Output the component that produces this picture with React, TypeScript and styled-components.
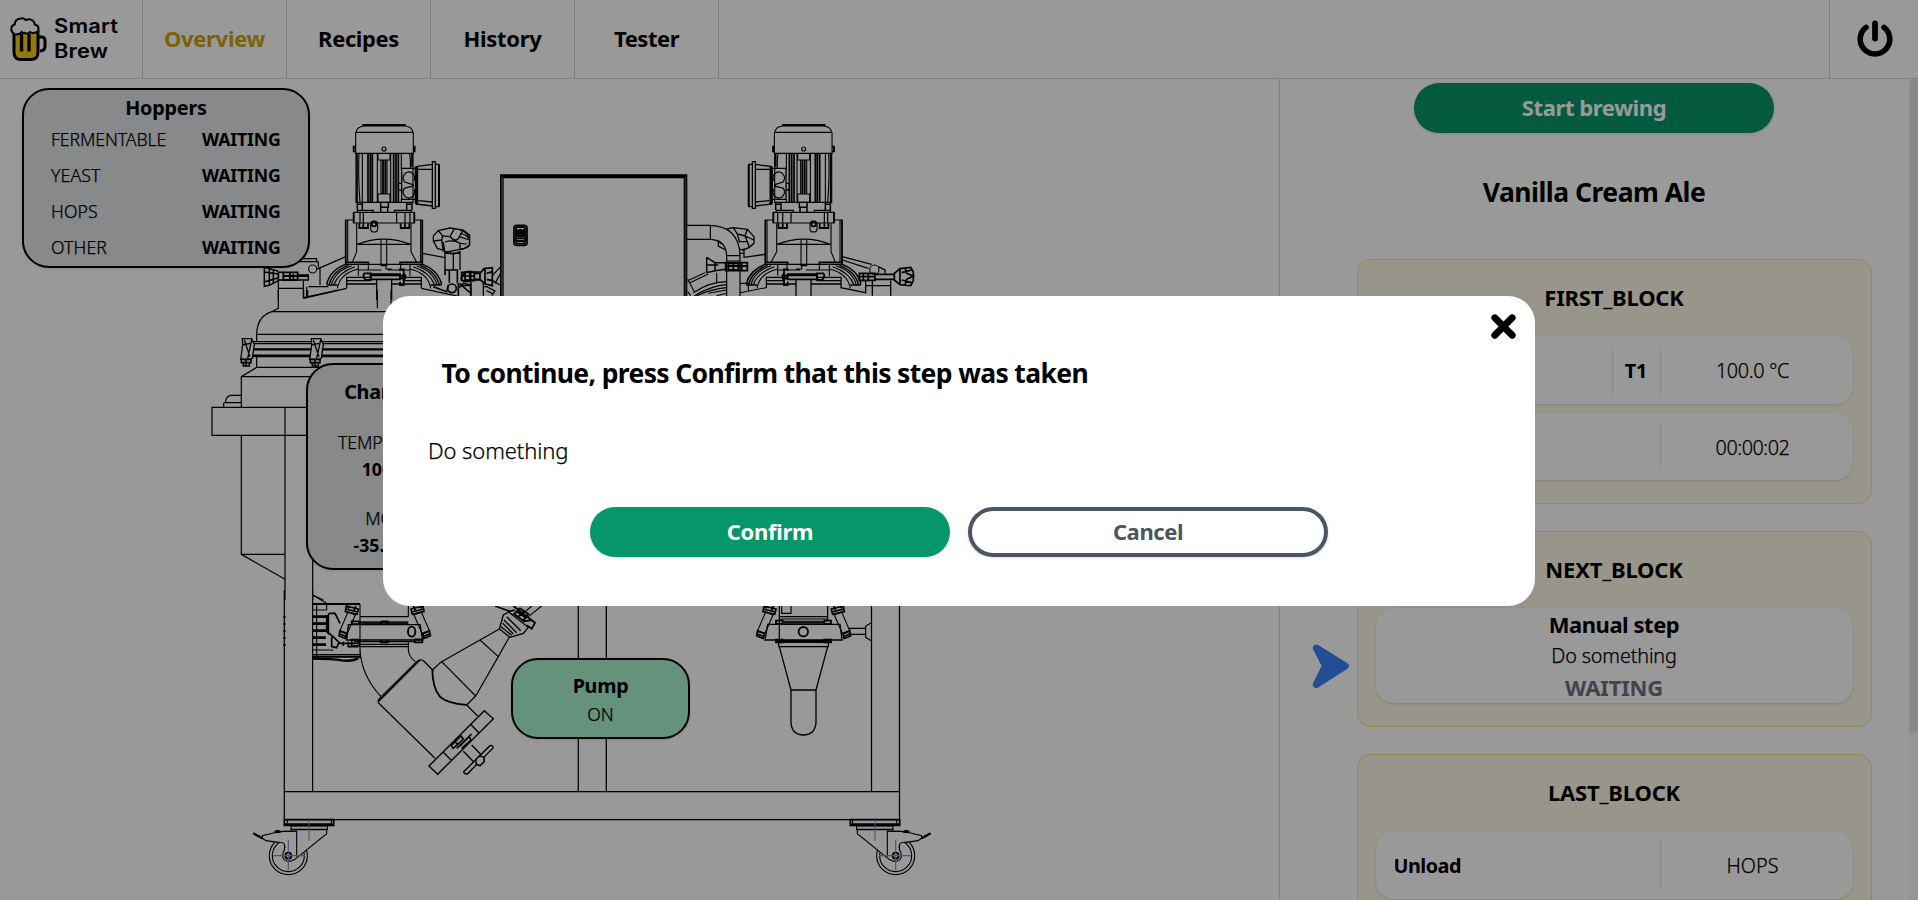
import React from 'react';
import styled, { createGlobalStyle, css } from 'styled-components';

const GlobalStyle = createGlobalStyle`
  * { box-sizing: border-box; }
  html, body { margin: 0; padding: 0; background: #fff; overflow: hidden; }
  body { font-family: 'Noto Sans', 'Open Sans', sans-serif; color: #000; }
`;

type TextProps = { $size?: number; $light?: boolean; $spacing?: number; $line?: number; $color?: string };

const Text = styled.span<TextProps>`
  display: block;
  white-space: nowrap;
  font-size: ${(p) => p.$size ?? 22}px;
  font-weight: ${(p) => (p.$light ? 300 : 700)};
  letter-spacing: ${(p) => (p.$spacing ?? 0) - (p.$light ? 0 : 0.2)}px;
  line-height: ${(p) => p.$line ?? 31.5}px;
  ${(p) => p.$light && css`-webkit-text-stroke: 0.25px currentColor;`}
  ${(p) => p.$color && css`color: ${p.$color};`}
`;

const Page = styled.div`
  display: flex;
  flex-direction: column;
  width: 1918px;
  height: 900px;
  overflow: hidden;
`;

/* Header */

const Header = styled.header`
  display: flex;
  flex: none;
  height: 79px;
  border-bottom: 1px solid #d1d5db;
`;

const Brand = styled.div`
  display: flex;
  align-items: center;
  gap: 6.5px;
  width: 143px;
  padding: 0 0 1px 9px;
  border-right: 1px solid #d1d5db;
`;

const BrandName = styled.div`
  font-family: Inter, 'Open Sans', sans-serif;
  font-size: 19.5px;
  font-weight: 600;
  line-height: 25px;
  letter-spacing: 0.2px;
  transform: scaleX(1.12);
  transform-origin: 0 50%;
`;

const NavItem = styled.a<{ $active?: boolean }>`
  display: flex;
  align-items: center;
  justify-content: center;
  width: 144px;
  border-right: 1px solid #d1d5db;
  color: ${(p) => (p.$active ? '#cfa20c' : '#000')};
`;

const PowerButton = styled.button`
  display: flex;
  align-items: center;
  justify-content: center;
  width: 89px;
  margin-left: auto;
  padding: 0 0 0 2px;
  background: none;
  border: 0;
  border-left: 1px solid #d1d5db;
`;

/* Body */

const Body = styled.main`
  display: flex;
  flex: 1;
  min-height: 0;
`;

const Diagram = styled.section`
  position: relative;
  width: 1279px;
  height: 821px;
  overflow: hidden;
`;

const Machine = styled.svg`
  display: block;
  fill: none;
  stroke: #000;
  & path, & rect, & circle, & ellipse { vector-effect: non-scaling-stroke; }
`;

const Node = styled.div<{ $x: number; $y: number; $w: number; $h: number; $bg: string; $pad: number }>`
  position: absolute;
  left: ${(p) => p.$x}px;
  top: ${(p) => p.$y}px;
  width: ${(p) => p.$w}px;
  height: ${(p) => p.$h}px;
  padding-top: ${(p) => p.$pad}px;
  display: flex;
  flex-direction: column;
  align-items: center;
  border: 2px solid #000;
  border-radius: 27px;
  background: ${(p) => p.$bg};
  box-shadow: 0 1px 3px rgba(0, 0, 0, 0.1);
`;

const HopperRow = styled.div`
  display: flex;
  justify-content: space-between;
  align-self: stretch;
  height: 36px;
  padding: 0 27.5px 0 27px;
`;

const Readings = styled.div`
  display: flex;
  flex: none;
  flex-direction: column;
  margin-top: 23px;
`;

const Reading = styled.div`
  display: flex;
  flex: none;
  flex-direction: column;
  align-items: center;
  height: 76px;
`;

const Sidebar = styled.aside`
  display: flex;
  flex: 1;
  border-left: 1px solid #d1d5db;
`;

const SideScroll = styled.div`
  display: flex;
  flex-direction: column;
  align-items: center;
  width: 628px;
  padding-top: 4px;
`;

const ScrollTrack = styled.div`
  width: 9px;
  margin-left: auto;
  background: #f9f9f9;
`;

const ScrollThumb = styled.div`
  height: 655px;
  border-radius: 5px;
  background: #e4e4e5;
`;

const Button = styled.button<{ $outline?: boolean }>`
  display: flex;
  flex: none;
  align-items: center;
  justify-content: center;
  width: 360px;
  height: 50px;
  padding: 0 0 1px;
  border-radius: 25px;
  font-family: inherit;
  border: ${(p) => (p.$outline ? '4px solid #4b5563' : '0')};
  background: ${(p) => (p.$outline ? '#fff' : '#059669')};
  color: ${(p) => (p.$outline ? '#4b5563' : '#fff')};
  box-shadow: 0 1px 3px rgba(0, 0, 0, 0.15);
`;

const RecipeTitle = styled.h2`
  margin: 41px 0 48.5px;
`;

const BlockList = styled.div`
  display: flex;
  flex-direction: column;
  align-self: stretch;
  gap: 27px;
`;

const BlockRow = styled.div`
  display: flex;
`;

const Gutter = styled.div`
  width: 77px;
  flex: none;
  padding: 112px 0 0 32px;
`;

const Block = styled.div`
  display: flex;
  flex: none;
  flex-direction: column;
  gap: 9px;
  width: 515px;
  padding: 0 18.5px 22.5px 17.5px;
  border: 1px solid #fbe37a;
  border-radius: 13.5px;
  background: #fefae6;
`;

const BlockTitle = styled.div`
  display: flex;
  justify-content: center;
  padding: 22.5px 0 13.5px;
`;

const Card = styled.div`
  display: flex;
  height: 67.5px;
  padding: 9px 0;
  border-radius: 18px;
  background: #fff;
  box-shadow: 0 1px 3px rgba(0, 0, 0, 0.14);
`;

const Cell = styled.div<{ $w?: number; $line?: boolean; $last?: boolean }>`
  display: flex;
  align-items: center;
  padding-top: 2px;
  ${(p) => (p.$w ? css`width: ${p.$w}px; justify-content: center;` : css`flex: 1; padding-left: 18px;`)}
  ${(p) => p.$last && css`padding-right: 8px;`}
  ${(p) => p.$line && css`border-left: 1px solid #e5e7eb;`}
`;

const ManualCard = styled(Card)`
  flex-direction: column;
  align-items: center;
  height: 95px;
  padding: 0.7px 0 0;
`;

/* Dialog */

const Overlay = styled.div`
  position: fixed;
  inset: 0;
  display: flex;
  justify-content: center;
  align-items: flex-start;
  padding-top: 296px;
  background: rgba(0, 0, 0, 0.4);
`;

const Dialog = styled.div`
  position: relative;
  width: 1152px;
  height: 310px;
  padding: 58.5px 45px 0;
  border-radius: 27px;
  background: #fff;
`;

const DialogTitle = styled.h1`
  margin: 0 0 44px 13.5px;
`;

const DialogActions = styled.div`
  display: flex;
  justify-content: center;
  gap: 18px;
  margin-top: 41px;
`;

const CloseButton = styled.button`
  position: absolute;
  top: 17px;
  right: 18px;
  display: flex;
  padding: 0;
  border: 0;
  background: none;
`;

const BeerIcon = () => (
  <svg width="38" height="46" viewBox="9 14 38 46" fill="none" stroke="#000">
    <path d="M38 35h3.500q3.500 0 3.500 3.500v6q0 4-5 4.500" strokeWidth="3" />
    <path d="M14 29V50q0 7.500 7 7.500h9.500q7.500 0 7.500-7.500V29z" fill="#facc15" strokeWidth="3" />
    <path d="M15 32.500q-4-2.500-3.700-6q.4-3.500 3.400-4q.3-5.500 6-6q3-.8 5 1.500q4-1.800 7 .5q2.200 1.600 2 4q4 .8 3.800 4.500q-.3 3.500-4 3.700q-2.500.8-4.500-.7q-2.500 2.500-5.500.8q-1.500.5-2.800-.8q-1.600 2.800-6.700 2.500z" fill="#fff" strokeWidth="2" />
    <path d="M21.500 32V49.500M29 32V49.500" strokeWidth="3.400" />
  </svg>
);

const PowerIcon = () => (
  <svg width="38" height="38" viewBox="1856 20 38 38" fill="none" stroke="#000" strokeWidth="6" strokeLinecap="round">
    <path d="M1866 27.400a14.800 14.800 0 1 0 18 0" strokeWidth="5.600" />
    <path d="M1875 23.500V38.500" strokeWidth="5.800" />
  </svg>
);

const CloseIcon = () => (
  <svg width="27" height="27" viewBox="0 0 27 27" stroke="#000" strokeWidth="6.900" strokeLinecap="round">
    <path d="M4.800 4.800L22.200 22.200M22.200 4.800L4.800 22.200" />
  </svg>
);

const PointerIcon = () => (
  <svg width="38" height="46" viewBox="1312 643 38 46" fill="#3b82f6" stroke="#3b82f6" strokeWidth="7" strokeLinejoin="round">
    <path d="M1316.300 648L1345.300 666L1316.300 684.500L1325.500 666z" />
  </svg>
);

/* Motor, gearbox and lid of one vessel */
const Motor = () => (
  <g transform="translate(0 70) scale(.333333)">
    <path d="M1087 165H1217" strokeWidth="2.200" />
    <path d="M1067 250V190Q1070 170 1092 168H1216Q1237 170 1240 190V250zM1067 187H1240" />
    <circle cx="1152" cy="237" r="6" />
    <path d="M1067 230h-6v14h6M1240 230h4v14h-4" strokeWidth="1.800" />
    <path d="M1068 250V397H1239V250M1077 250Q1074 320 1080 397M1087 250V397M1132 250V397M1172 250V397M1204 250V300M1204 388V397M1229 250Q1233 275 1231 295M1172 330V397" />
    <path d="M1071 250V397M1104 250V397M1111 250V397M1117 250V397M1181 250V397M1188 250V397M1195 250V397M1236 250V290" strokeWidth="1.700" />
    <path d="M1134 250V270H1170V250M1134 372H1170V397H1134zM1143 270V372M1161 270V372" />
    <path d="M1149 270V372M1156 270V372" strokeWidth="1.800" />
    <path d="M1142 398V412H1165V398M1142 412V427M1163 412V427M1072 398V420M1087 398V420M1220 398V420M1236 398V420M1072 403H1087M1220 403H1236" strokeWidth="1.500" />
    <path d="M1245 295H1205V388H1245M1242 332A17 18 0 1 0 1214 336L1236 343Q1242 346 1236 349L1214 354A17 18 0 1 0 1242 358M1205 340H1195V360H1205" strokeWidth="1.300" />
    <path d="M1247 290V402M1252 290V402" strokeWidth="1.700" />
    <path d="M1247 290L1297 283M1247 402L1297 408M1255 298H1297M1255 392L1297 396M1297 275H1306V415H1297zM1306 283H1317V410H1306M1297 275V415" strokeWidth="1.300" />
    <path d="M1317 285V408" strokeWidth="2" />
    <path d="M1061 427H1243V459H1061zM1080 427V459M1090 427V459M1190 427V459M1215 427V459M1230 427V459M1072 427V421H1120V427M1183 427V421H1234V427" strokeWidth="1.200" />
    <path d="M1061 427V459M1243 427V459M1078 460V474H1104V460M1090 460V474M1202 460V474H1228V460M1215 460V474" strokeWidth="1.800" />
    <rect x="1112" y="453" width="21" height="33" rx="10" />
    <circle cx="1122" cy="462" r="7" strokeWidth="1.700" />
    <path d="M1063 450H1037V583H1267V450H1243M1043 450V577M1262 450V577M1070 460V545L1057 577M1233 460V545L1250 577M1072 523Q1150 492 1232 523M1072 523H1232M1143 510V587H1160V510" />
    <path d="M1037 450V583M1267 450V583M1037 577H1105V585M1267 577H1200V585" strokeWidth="1.600" />
    <path d="M1075 585V617M1230 585V617M1075 600H1145M1163 600H1230M1105 585V600M1202 585V600M1158 585V597H1175" />
    <path d="M1112 612H1200V628H1112zM1112 616H1200" strokeWidth="1.700" />
    <path d="M1093 610H1112V630H1097Q1086 620 1093 610zM1200 603V598H1211V645H1200V635M1211 610Q1222 620 1211 632" strokeWidth="1.800" />
    <circle cx="1206" cy="621" r="5" strokeWidth="1.800" />
    <path d="M1037 583Q990 600 980 643M1045 586Q998 603 987 645M1267 583Q1314 600 1325 643M1260 586Q1307 603 1318 645" strokeWidth="1.500" />
    <path d="M1055 587Q1005 603 994 645M1065 590Q1015 607 1001 645M1075 597Q1020 610 1012 655M1250 587Q1300 603 1311 645M1240 590Q1290 607 1304 645M1230 597Q1285 610 1292 655" />
    <path d="M980 645H1012M1292 645H1325M1040 655V622H1110M1200 622H1264V655M1040 632H1110M1212 632H1264M1040 642H1130M1175 642H1264M1130 630V690M1175 630V690" strokeWidth="1.300" />
  </g>
);

const Caster = () => (
  <g transform="translate(230 770) scale(.333333)">
    <circle cx="175" cy="257" r="57" />
    <circle cx="175" cy="257" r="48" />
    <path d="M290 178V191L195 268Q175 280 161 268Q154 256 163 240Q170 215 145 217L108 212L97 205V197L140 187L160 184H184V178z" fill="#fff" />
    <path d="M70 190L97 205" strokeWidth="2.200" />
    <path d="M135 184Q143 180 152 184L150 187L137 188z" fill="#000" />
    <path d="M160 184H200V260M183 168H292V179H183zM172 149V160M304 149V160" />
    <path d="M163 149H311V166H163zM163 162H311" strokeWidth="1.700" />
    <circle cx="175" cy="257" r="9" strokeWidth="1.800" />
    <path d="M237 150V212M175 210V300M130 257H225" stroke="#8484d8" />
  </g>
);

/* Spring arm that carries the flange under each vessel */
const Arm = () => (
  <>
    <path d="M204 66L226 75L201 132L179 124z" />
    <path d="M199 48L235 57L231 73L196 65zM197 57L233 66M200 46L207 55M228 48L222 60M180 122L200 130L197 145L190 143L177 137zM177 131L197 139" strokeWidth="1.700" />
  </>
);

const MachineDrawing = () => (
  <Machine width="1279" height="821" viewBox="0 79 1279 821" strokeWidth="1.100">
    <Motor />
    <g transform="translate(1187.700 0) scale(-1 1)"><Motor /></g>

    {/* lid fittings of the left vessel */}
    <g transform="translate(0 70) scale(.333333)">
      <path d="M900 566H950V575M890 575H955M955 575V592M950 598L1037 560M1267 550L1335 563M835 632V690M910 685V632M920 650V683M925 650H985M910 685L1040 655M1264 655L1370 678V690M960 590V645M835 655H910" strokeWidth="1.200" />
      <circle cx="938" cy="597" r="12" />
      <path d="M793 592V649L808 646L837 631M793 592L835 604M793 606L835 612M793 636L833 624M820 600V640M808 597V645M835 607H850M835 630H925V615H895" strokeWidth="1.500" />
      <path d="M850 607H893V630H850zM870 607V630M880 612V626M850 618H925M835 607V630" strokeWidth="1.800" />
      <path d="M1300 513V498L1315 482L1350 474L1390 480L1409 495V525L1390 537L1345 545L1312 535zM1315 482L1328 498L1350 500L1362 478M1390 480L1378 500L1409 510M1300 513L1325 510L1330 545M1328 498L1325 510M1350 500Q1370 520 1378 500M1330 516L1335 550H1380V520Q1360 508 1335 516M1335 550V600M1380 545V600M1360 550V600" strokeWidth="1.300" />
      <path d="M1335 546Q1357 556 1380 546M1348 600H1372V640M1348 600V638M1348 600H1335V615M1300 650L1340 665L1345 645M1395 606H1440M1395 630H1440M1382 628L1395 606L1412 604V632M1378 640L1410 668M1378 652L1390 640L1410 645M1412 640V690M1375 640V690" strokeWidth="1.600" />
      <circle cx="1356" cy="655" r="13" strokeWidth="1.700" />
    </g>

    {/* cabinet, connecting pipe and right vessel fittings */}
    <g transform="translate(460 110) scale(.333333)">
      <path d="M0 360Q28 370 28 390V405Q25 415 0 418M0 370L15 375L28 385M0 400L20 402" />
      <path d="M5 487H43V512H5zM15 487V512M30 487V512M5 498H43M43 490H60L72 476L97 473V527L75 522L60 508H43M60 490V508M75 475V522M80 490L97 485M80 508L97 512" strokeWidth="1.700" />
      <path d="M33 515V557M70 515V557M10 515H33M0 527H33M97 497L122 470M97 512L120 525M70 530H80L105 543L95 557M80 542L100 552M105 520L122 490" strokeWidth="1.300" />
      <path d="M122 560V195H680V560M129 560V203H673V560" strokeWidth="1.300" />
      <path d="M122 199.500H680" strokeWidth="3" />
      <path d="M125.500 200V560M676.500 200V560" stroke="#444" strokeWidth="1.600" />
      <rect x="162" y="346" width="39" height="60" rx="8" strokeWidth="1.800" />
      <rect x="168" y="351" width="27" height="50" rx="5" strokeWidth="1.800" />
      <circle cx="181" cy="370" r="10" fill="#333" strokeWidth="2" />
      <path d="M170 385H193M170 393H193M168 358L193 380M193 358L168 380" strokeWidth="1.800" />
      <path d="M680 346H751V388H680M751 346Q838 350 840 437V558M751 388Q798 390 800 437V558M800 437H840M800 453H840M680 560" strokeWidth="1.200" />
      <path d="M800 357L820 353L862 358L882 380V400L868 412L850 420L840 418M775 392L785 402M775 392V408L797 420M862 358L855 378L882 390M820 353L832 372L855 378M832 372L838 395H862L868 412M862 395L855 378M852 415V442L915 433M840 430H852" strokeWidth="1.300" />
      <path d="M740 442V488L765 482L797 478M740 442L765 458H797M740 465H775M765 458V482" strokeWidth="1.500" />
      <path d="M797 458H862V482H797zM805 460H835V480H805zM820 460V480M797 468H862M845 458V482" strokeWidth="1.800" />
      <path d="M683 508L703 545M683 545L692 557M683 512L735 488M690 518L745 492M700 548Q750 515 800 515M703 557Q755 527 800 524M710 557Q755 537 800 533M770 488V520M745 550L800 540M770 557L800 550M840 520H865V545M840 548L918 533" />
      <path d="M1147 440L1235 463M1255 470L1275 480V490M1217 512V548L1142 533M1237 512V557M1292 512V557M1217 527H1292M1147 450L1225 475M1200 512H1217" strokeWidth="1.300" />
      <circle cx="1243" cy="479" r="14" />
      <path d="M1198 490H1245V511H1198zM1210 490V511M1225 490V511M1198 500H1245M1245 493H1303V508H1245M1303 490L1320 476L1352 472L1360 485V512L1352 527L1320 524L1303 510zM1303 490V510M1320 476V524M1325 488L1355 480M1325 510L1355 518M1335 474L1340 490L1360 498L1340 508L1335 526" strokeWidth="1.700" />
    </g>

    {/* left vessel shell */}
    <g transform="translate(200 290) scale(.333333)">
      <path d="M235 0V55L215 65Q170 80 170 135V155M215 65H600M170 133H600M311 0V23L415 0M323 0V18M532 0V55M573 0V55M170 200V232L124 260V352M170 232H600M124 260H600M124 316H92Q78 318 76 338M72 338H124M71 338V352M330 352H36V436H330M255 352V930M124 436V793L255 868M124 793H255M338 800V930M338 915L370 930" strokeWidth="1.200" />
      <path d="M152 155H600M152 161H600M152 200H600" strokeWidth="1.200" />
      <path d="M152 178H600M152 197H600" strokeWidth="2.100" />
      {[0, 207].map((dx) => (
        <g key={dx} transform={`translate(${dx} 0)`}>
          <path d="M127 146H155L163 163L157 205L150 208H122L128 165zM133 150L150 200M155 150L143 205M128 165L150 160" strokeWidth="1.300" fill="#fff" />
          <path d="M124 208H153V218H124zM130 218H148V228H130zM138 210V228" strokeWidth="1.600" />
        </g>
      ))}
    </g>

    {/* base frame */}
    <path d="M284.300 590V819.500H899.500V590M284.300 791.500H899.500M312.600 590V791.500M578.300 590V791.500M606.300 590V791.500M871.500 590V791.500" strokeWidth="1.250" />
    <path d="M284.500 616V646" strokeWidth="2.200" strokeDasharray="2 5" />

    {/* left outlet with drive, elbow and branch */}
    <g transform="translate(280 590) scale(.333333)">
      <path d="M98 15L140 40M110 45V205M98 194H240M98 180H160M140 42V60M98 60H140M240 42V205M240 80H385M385 48V80M240 170H385M303 150V157M240 157V175Q242 255 303 320M385 157V180Q386 200 406 215" />
      <path d="M98 42H240M98 200H240" strokeWidth="2" />
      <path d="M98 80H138M98 101H138M98 122H138M98 143H138M98 164H138" strokeWidth="2.700" />
      <path d="M98 206Q160 206 185 211Q215 215 235 205" strokeWidth="2.400" />
      <path d="M145 128V75Q145 70 152 70H165L180 100M145 128L165 145L180 160H240M155 140V170L170 173L178 155M205 155V170H235M190 155V168M140 75V125L148 133" strokeWidth="1.700" />
      <path d="M235 98H385" stroke="#222" strokeWidth="3" />
      <path d="M205 104H420L428 150H200zM222 155H405M240 163H385" strokeWidth="1.400" />
      <path d="M303 94H323V102M303 94V102M303 150V157H323V150M215 94H238V102H215zM405 148H427V157H405zM215 149H238V168H215z" strokeWidth="1.700" />
      <ellipse cx="395" cy="125" rx="11" ry="15" strokeWidth="1.900" />
      <Arm />
      <g transform="translate(628 0) scale(-1 1)"><Arm /></g>
      <path d="M303 325L418 209M295 335L420 210Q426 208 432 214L461 243M295 328V338L465 505M303 320L295 330" strokeWidth="1.300" />
      <path d="M305 320L412 214" strokeWidth="1.800" stroke="#222" />
      <path d="M447 528L613 362L640 386L473 553zM490 487L516 513M572 403L597 429" strokeWidth="1.400" />
      <path d="M513 467L543 438L550 447L520 475zM525 455L535 465M540 468L567 440L573 450L545 475M530 475L575 432" strokeWidth="1.600" />
      <path d="M550 484L590 525M575 465L612 503V515L600 527L588 522M590 525L612 503" strokeWidth="1.400" />
      <path d="M551 545L630 467Q636 464 640 473L562 552Q552 553 551 545z" strokeWidth="1.400" fill="#fff" />
      <path d="M588 508L600 497L612 503V515L600 527L588 522z" strokeWidth="1.400" fill="#fff" />
      <path d="M485 215L658 117M457 240L485 215L587 318L655 200L688 141M600 150L655 200M560 345L587 318M560 345L593 378" strokeWidth="1.200" />
      <path d="M457 240Q458 295 480 320Q500 340 560 345" strokeWidth="1.800" />
      <path d="M658 117L690 142M663 110L695 136M658 117L670 75L686 66L745 112L730 130L690 142M672 90L710 128M680 80L722 122M668 100L700 132" strokeWidth="1.300" />
      <path d="M700 48L765 98L755 116L740 106M645 48L690 64L705 60M702 72L730 92L745 72L720 55zM712 65L735 82M715 80L735 62M728 95L755 90" strokeWidth="1.800" />
      <path d="M745 80L785 48M730 70L755 48" />
    </g>

    {/* right outlet */}
    <g transform="translate(500 590) scale(.333333)">
      <path d="M838 48V155M983 48V92M845 48V70H873V48M838 80H983M838 87H983M1115 98L1097 108V142L1115 153M1045 115H1097M1045 133H1097" strokeWidth="1.200" />
      <path d="M850 97H975" strokeWidth="3" stroke="#222" />
      <path d="M803 103H1020L1026 150H795zM828 153H993M836 157H985V170H836zM838 170L873 300H948L983 170M873 300V398Q876 435 910 435Q945 435 948 398V300" strokeWidth="1.300" />
      <path d="M828 92H848V102H828zM973 92H993V102H973zM828 149H848V157H828zM973 149H993V157H973z" strokeWidth="1.800" />
      <circle cx="910" cy="125" r="14" strokeWidth="1.900" />
      <g transform="translate(593 0)"><Arm /></g>
      <g transform="translate(1229 0) scale(-1 1)"><Arm /></g>
    </g>

    <Caster />
    <g transform="translate(1184 0) scale(-1 1)"><Caster /></g>
  </Machine>
);

const HOPPERS: [string, number][] = [['FERMENTABLE', -0.12], ['YEAST', 0.1], ['HOPS', 0.1], ['OTHER', 0.05]];
const NAV: [string, number][] = [['Overview', -0.1], ['Recipes', -0.2], ['History', -0.1], ['Tester', -0.25]];

export default function App() {
  return (
    <>
      <GlobalStyle />
      <Page>
        <Header>
          <Brand>
            <BeerIcon />
            <BrandName>Smart<br />Brew</BrandName>
          </Brand>
          {NAV.map(([label, spacing], i) => (
            <NavItem key={label} $active={i === 0}><Text $spacing={spacing}>{label}</Text></NavItem>
          ))}
          <PowerButton aria-label="Power"><PowerIcon /></PowerButton>
        </Header>

        <Body>
          <Diagram>
            <MachineDrawing />
            <Node $x={22} $y={9} $w={288} $h={180} $bg="#e1e4e6" $pad={2}>
              <Text $size={19.8}>Hoppers</Text>
              {HOPPERS.map(([name, spacing], i) => (
                <HopperRow key={name} style={i === 0 ? { marginTop: -2.5 } : undefined}>
                  <Text $size={17.7} $light $spacing={spacing} $line={36}>{name}</Text>
                  <Text $size={17.7} $line={36}>WAITING</Text>
                </HopperRow>
              ))}
            </Node>
            <Node $x={306} $y={284} $w={180} $h={207} $bg="#e1e4e6" $pad={12}>
              <Text $size={19.8} $line={29} $spacing={-0.1}>Chamber 1</Text>
              <Readings>
                <Reading>
                  <Text $size={17.7} $light $line={27} $spacing={-0.15}>TEMPERATURE</Text>
                  <Text $size={17.7} $line={27} $spacing={0.15}>100.0 °C</Text>
                </Reading>
                <Reading>
                  <Text $size={17.7} $light $line={27}>MOTOR</Text>
                  <Text $size={17.7} $line={27} $spacing={0.2}>-35.0 RPM</Text>
                </Reading>
              </Readings>
            </Node>
            <Node $x={511} $y={579} $w={179} $h={81} $bg="#a7f3d0" $pad={11}>
              <Text $size={19.8} $line={29} $spacing={-0.1}>Pump</Text>
              <Text $size={17.7} $light $line={28}>ON</Text>
            </Node>
          </Diagram>

          <Sidebar>
            <SideScroll>
              <Button><Text $spacing={-0.2}>Start brewing</Text></Button>
              <RecipeTitle><Text $size={26.5} $line={36} $spacing={-0.3}>Vanilla Cream Ale</Text></RecipeTitle>
              <BlockList>
                <BlockRow>
                  <Gutter />
                  <Block>
                    <BlockTitle><Text>FIRST_BLOCK</Text></BlockTitle>
                    <Card>
                      <Cell><Text $size={19.8} $spacing={-0.2}>Heat</Text></Cell>
                      <Cell $w={48} $line><Text $size={19.8}>T1</Text></Cell>
                      <Cell $w={193} $line $last><Text $size={19.8} $light $spacing={-0.35}>100.0 °C</Text></Cell>
                    </Card>
                    <Card>
                      <Cell><Text $size={19.8} $spacing={-0.2}>Wait</Text></Cell>
                      <Cell $w={193} $line $last><Text $size={19.8} $light $spacing={-0.45}>00:00:02</Text></Cell>
                    </Card>
                  </Block>
                </BlockRow>
                <BlockRow>
                  <Gutter><PointerIcon /></Gutter>
                  <Block>
                    <BlockTitle><Text>NEXT_BLOCK</Text></BlockTitle>
                    <ManualCard>
                      <Text $spacing={-0.25}>Manual step</Text>
                      <Text $size={19.8} $light $spacing={-0.15}>Do something</Text>
                      <Text $color="#6b7280">WAITING</Text>
                    </ManualCard>
                  </Block>
                </BlockRow>
                <BlockRow>
                  <Gutter />
                  <Block>
                    <BlockTitle><Text>LAST_BLOCK</Text></BlockTitle>
                    <Card>
                      <Cell><Text $size={19.8} $spacing={-0.3}>Unload</Text></Cell>
                      <Cell $w={193} $line $last><Text $size={19.8} $light $spacing={0}>HOPS</Text></Cell>
                    </Card>
                  </Block>
                </BlockRow>
              </BlockList>
            </SideScroll>
            <ScrollTrack><ScrollThumb /></ScrollTrack>
          </Sidebar>
        </Body>
      </Page>

      <Overlay>
        <Dialog role="dialog">
          <CloseButton aria-label="Close"><CloseIcon /></CloseButton>
          <DialogTitle><Text $size={26.5} $line={36} $spacing={-0.44}>To continue, press Confirm that this step was taken</Text></DialogTitle>
          <Text $light $spacing={-0.1}>Do something</Text>
          <DialogActions>
            <Button><Text $spacing={-0.1}>Confirm</Text></Button>
            <Button $outline><Text $spacing={-0.2}>Cancel</Text></Button>
          </DialogActions>
        </Dialog>
      </Overlay>
    </>
  );
}
